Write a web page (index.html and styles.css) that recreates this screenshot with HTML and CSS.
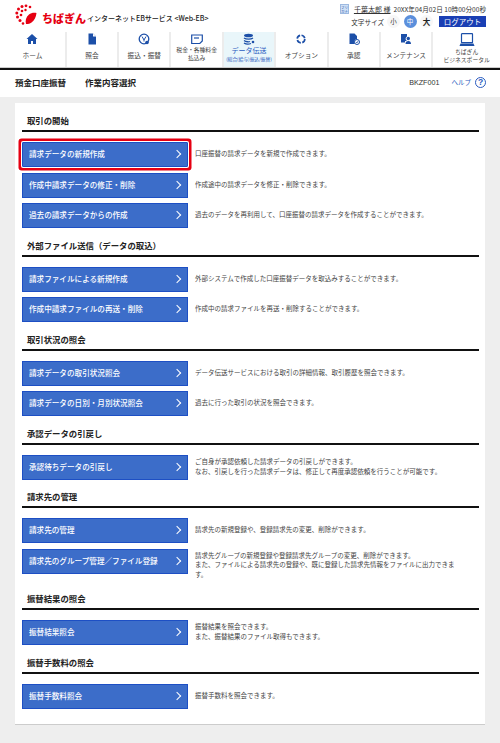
FILE: index.html
```html
<!DOCTYPE html>
<html>
<head>
    <title>作業内容選択</title>
    <link rel="stylesheet" href="styles.css">
</head>
<body>
    <header class="header">
        <div class="top">
            <div class="brand">
                <svg class="logo" viewBox="0 0 22 22" width="22" height="22">
                    <g fill="#e60012">
                        <path d="M11 20c-1-3 0-7 3-9.500 2-1.700 5-2.200 7.500-1.500-.5 4-2 7.500-5 9.500-1.700 1.100-3.600 1.600-5.500 1.500z"/>
                        <circle cx="7" cy="2.500" r="1.500"/>
                        <circle cx="11" cy="1.800" r="1.400"/>
                        <circle cx="15" cy="3" r="1.300"/>
                        <circle cx="3.500" cy="5" r="1.500"/>
                        <circle cx="1.800" cy="9" r="1.500"/>
                        <circle cx="2.500" cy="13" r="1.500"/>
                        <circle cx="5" cy="16.500" r="1.500"/>
                        <circle cx="8" cy="19.500" r="1.300"/>
                        <circle cx="7" cy="7" r="1.300"/>
                        <circle cx="10.500" cy="6" r="1.200"/>
                        <circle cx="6" cy="11" r="1.300"/>
                    </g>
                </svg>
                <span class="bank">ちばぎん</span>
                <span class="service">インターネットEBサービス &lt;Web-EB&gt;</span>
            </div>
            <div class="user">
                <div class="user-row">
                    <span class="kana">フリ<br>ガナ</span>
                    <a class="name">千葉太郎 様</a>
                    <span class="date">20XX年04月02日 10時00分00秒</span>
                </div>
                <div class="user-row size-row">
                    <span class="size-label">文字サイズ</span>
                    <span class="size">小</span>
                    <span class="size active">中</span>
                    <span class="size large">大</span>
                    <span class="logout">ログアウト</span>
                </div>
            </div>
        </div>
        <nav class="nav">
            <a class="nav-item first">
                <svg viewBox="0 0 12 12" width="12" height="12"><path d="M6 1 .5 6H2v5h3V8h2v3h3V6h1.500z" fill="#1c4fa8"/></svg>
                <span>ホーム</span>
            </a>
            <a class="nav-item">
                <svg viewBox="0 0 12 12" width="12" height="12"><path d="M2.500 .5h4.500l3 3v8h-7.500z" fill="#1c4fa8"/><path d="M7 .5v3h3" fill="#fff"/></svg>
                <span>照会</span>
            </a>
            <a class="nav-item">
                <svg viewBox="0 0 12 12" width="12" height="12"><circle cx="6" cy="6" r="4.800" fill="none" stroke="#1c4fa8" stroke-width="1.300"/><path d="M4 3.500 6 7l2-3.500M6 7v1.500" fill="none" stroke="#1c4fa8"/><circle cx="9" cy="9.500" r="1.800" fill="#1c4fa8"/></svg>
                <span>振込・振替</span>
            </a>
            <a class="nav-item small">
                <svg viewBox="0 0 12 12" width="12" height="12"><path d="M.7 2h10.600v6l-2.500 2.500H.7z" fill="none" stroke="#1c4fa8" stroke-width="1.200"/><path d="M3 5h5" stroke="#1c4fa8" stroke-width="1.200"/></svg>
                <span>税金・各種料金<br>払込み</span>
            </a>
            <a class="nav-item small current">
                <svg viewBox="0 0 12 12" width="12" height="12"><ellipse cx="5.500" cy="2.500" rx="4.500" ry="1.800" fill="#1c4fa8"/><path d="M1 5c2 1.500 7 1.500 9 0M1 7.500c2 1.500 5 1.500 6 1M1 10c2 1.300 5 1.300 7 .5" fill="none" stroke="#1c4fa8" stroke-width="1.300"/><circle cx="10" cy="9" r="1.300" fill="#1c4fa8"/></svg>
                <span class="current-label">データ伝送</span>
                <span class="current-sub">(総合(給与)振込/振替)</span>
            </a>
            <a class="nav-item">
                <svg viewBox="0 0 12 12" width="12" height="12"><circle cx="6" cy="6" r="3.800" fill="none" stroke="#1c4fa8" stroke-width="1.700" stroke-dasharray="4.500 1.500"/></svg>
                <span>オプション</span>
            </a>
            <a class="nav-item">
                <svg viewBox="0 0 12 12" width="12" height="12"><path d="M1.500 .5h5l2.500 2.500v3a3 3 0 0 0-2 5h-5.500z" fill="#1c4fa8"/><circle cx="9" cy="9" r="2.500" fill="none" stroke="#1c4fa8"/><path d="M8 9l1 1 1-2" fill="none" stroke="#1c4fa8" stroke-width=".7"/></svg>
                <span>承認</span>
            </a>
            <a class="nav-item">
                <svg viewBox="0 0 12 12" width="12" height="12"><path d="M1 1h6v2.500a2.500 2.500 0 0 0 0 4.500H5v1.500h-4z" fill="#1c4fa8"/><circle cx="8.300" cy="5.500" r="1.700" fill="#1c4fa8"/><path d="M5.500 11c0-2 1-3 2.800-3s2.700 1 2.700 3z" fill="#1c4fa8"/></svg>
                <span>メンテナンス</span>
            </a>
            <a class="nav-item last small">
                <svg viewBox="0 0 16 14" width="16" height="14"><rect x="2.500" y=".7" width="11" height="9" rx=".5" fill="none" stroke="#1c4fa8" stroke-width="1.200"/><path d="M1.500 10.500h13l1 2.500H.5z" fill="#1c4fa8"/></svg>
                <span>ちばぎん<br>ビジネスポータル</span>
            </a>
        </nav>
    </header>

    <div class="title-bar">
        <div class="titles">
            <span>預金口座振替</span>
            <span>作業内容選択</span>
        </div>
        <div class="help-box">
            <span class="screen-id">BKZF001</span>
            <a class="help">ヘルプ</a>
            <span class="help-mark">?</span>
        </div>
    </div>

    <main class="card">
        <section class="section">
            <h2>取引の開始</h2>
            <div class="row">
                <a class="btn focus"><span>請求データの新規作成</span></a>
                <p>口座振替の請求データを新規で作成できます。</p>
            </div>
            <div class="row">
                <a class="btn"><span>作成中請求データの修正・削除</span></a>
                <p>作成途中の請求データを修正・削除できます。</p>
            </div>
            <div class="row">
                <a class="btn"><span>過去の請求データからの作成</span></a>
                <p>過去のデータを再利用して、口座振替の請求データを作成することができます。</p>
            </div>
        </section>

        <section class="section">
            <h2>外部ファイル送信（データの取込）</h2>
            <div class="row">
                <a class="btn"><span>請求ファイルによる新規作成</span></a>
                <p>外部システムで作成した口座振替データを取込みすることができます。</p>
            </div>
            <div class="row">
                <a class="btn"><span>作成中請求ファイルの再送・削除</span></a>
                <p>作成中の請求ファイルを再送・削除することができます。</p>
            </div>
        </section>

        <section class="section">
            <h2>取引状況の照会</h2>
            <div class="row">
                <a class="btn"><span>請求データの取引状況照会</span></a>
                <p>データ伝送サービスにおける取引の詳細情報、取引履歴を照会できます。</p>
            </div>
            <div class="row">
                <a class="btn"><span>請求データの日別・月別状況照会</span></a>
                <p>過去に行った取引の状況を照会できます。</p>
            </div>
        </section>

        <section class="section">
            <h2>承認データの引戻し</h2>
            <div class="row">
                <a class="btn"><span>承認待ちデータの引戻し</span></a>
                <p>ご自身が承認依頼した請求データの引戻しができます。<br>なお、引戻しを行った請求データは、修正して再度承認依頼を行うことが可能です。</p>
            </div>
        </section>

        <section class="section">
            <h2>請求先の管理</h2>
            <div class="row">
                <a class="btn"><span>請求先の管理</span></a>
                <p>請求先の新規登録や、登録請求先の変更、削除ができます。</p>
            </div>
            <div class="row tall">
                <a class="btn"><span>請求先のグループ管理／ファイル登録</span></a>
                <p>請求先グループの新規登録や登録請求先グループの変更、削除ができます。<br>また、ファイルによる請求先の登録や、既に登録した請求先情報をファイルに出力できます。</p>
            </div>
        </section>

        <section class="section">
            <h2>振替結果の照会</h2>
            <div class="row">
                <a class="btn"><span>振替結果照会</span></a>
                <p>振替結果を照会できます。<br>また、振替結果のファイル取得もできます。</p>
            </div>
        </section>

        <section class="section">
            <h2>振替手数料の照会</h2>
            <div class="row">
                <a class="btn"><span>振替手数料照会</span></a>
                <p>振替手数料を照会できます。</p>
            </div>
        </section>
    </main>
</body>
</html>
```

FILE: styles.css
```css
* {
    box-sizing: border-box;
}
html, body {
    height: 743px;
    overflow: hidden;
}
body {
    margin: 0;
    background: #eeeeee;
    font-family: "Noto Sans CJK JP", "Noto Sans", sans-serif;
    color: #333;
}
.header {
    background: #fff;
    border-bottom: 2px solid #111;
    height: 70px;
}
.top {
    display: flex;
    justify-content: space-between;
    height: 32px;
}
.brand {
    display: flex;
    align-items: center;
    padding: 6px 0 2px 15px;
}
.logo {
    margin: 0 5px 6px 0;
}
.bank {
    color: #e60012;
    font-size: 11px;
    font-weight: 900;
    line-height: 14px;
}
.service {
    margin-left: 1px;
    font-size: 7px;
    font-weight: 500;
    color: #222;
    white-space: nowrap;
}
.user {
    padding: 3px 14px 0 0;
}
.user-row {
    display: flex;
    align-items: center;
    justify-content: flex-end;
    height: 11px;
    font-size: 6.600px;
    white-space: nowrap;
}
.kana {
    width: 9px;
    height: 10px;
    margin-right: 5px;
    padding-top: 1px;
    background: #cfe0f5;
    border: 1px solid #9db9e0;
    color: #2a5bb0;
    font-size: 3.500px;
    line-height: 4px;
    text-align: center;
}
.name {
    margin-right: 3px;
    font-size: 7px;
    text-decoration: underline;
}
.size-row {
    height: 13px;
    margin-top: 1px;
}
.size-label {
    margin-right: 3px;
    font-size: 6.600px;
}
.size {
    width: 13px;
    height: 13px;
    margin-right: 3.500px;
    border-radius: 50%;
    background: #f7f7f7;
    font-size: 6.500px;
    line-height: 13px;
    text-align: center;
}
.size.active {
    background: #5b8fdc;
    color: #fff;
}
.size.large {
    font-size: 7.500px;
    font-weight: 700;
    color: #222;
}
.logout {
    width: 47px;
    height: 11px;
    margin-left: 2.500px;
    background: #1a3fb4;
    color: #fff;
    font-size: 7.500px;
    line-height: 11px;
    text-align: center;
}
.nav {
    display: flex;
    height: 36px;
    border-bottom: 1px solid #ccc;
}
.nav-item {
    display: flex;
    flex-direction: column;
    align-items: center;
    width: 52.500px;
    padding-top: 1px;
    border-right: 2px solid #ececec;
    font-size: 6.700px;
    line-height: 8px;
    text-align: center;
    color: #444;
    white-space: nowrap;
}
.nav-item span {
    margin-top: 6px;
}
.nav-item.first {
    width: 67px;
}
.nav-item.last {
    width: 67px;
    border-right: none;
}
.nav-item.small {
    font-size: 5.800px;
    line-height: 8.500px;
}
.nav-item.small span {
    margin-top: .5px;
}
.nav-item.current {
    background: #e9f6fa;
    color: #2a5bc0;
}
.nav-item.current .current-label {
    margin-top: 1px;
    font-size: 7px;
}
.nav-item.current .current-sub {
    margin-top: 0;
    font-size: 4.700px;
}
.title-bar {
    display: flex;
    justify-content: space-between;
    align-items: center;
    height: 27px;
    padding: 0 14px 3px 15px;
    background: #fff;
}
.titles {
    display: flex;
    gap: 19px;
    font-size: 8.500px;
    font-weight: 700;
    color: #222;
}
.help-box {
    display: flex;
    align-items: center;
}
.screen-id {
    margin-right: 12px;
    font-family: "Liberation Sans", sans-serif;
    font-size: 7.200px;
}
.help {
    margin-right: 4px;
    color: #2a5bc0;
    font-size: 6.500px;
}
.help-mark {
    width: 11px;
    height: 11px;
    border: 1.200px solid #2a5bc0;
    border-radius: 50%;
    color: #2a5bc0;
    font-family: "Liberation Sans", sans-serif;
    font-size: 8.500px;
    font-weight: 700;
    line-height: 9px;
    text-align: center;
}
.card {
    width: 470px;
    height: 622px;
    margin: 6px 0 0 15px;
    padding: 12px 6px 0 7px;
    background: #fff;
    border-bottom: 1px solid #ccc;
}
.section {
    margin-bottom: 11.500px;
}
.section h2 {
    margin: 0 0 10px;
    padding: 0 0 5px 5px;
    border-bottom: 2px solid #111;
    font-size: 8.400px;
    font-weight: 700;
    line-height: 10px;
    color: #222;
}
.row {
    display: flex;
    align-items: flex-start;
    margin-bottom: 5.500px;
}
.row:last-child {
    margin-bottom: 0;
}
.row.tall {
    padding-bottom: 1px;
}
.btn {
    display: flex;
    flex: none;
    justify-content: space-between;
    align-items: center;
    width: 166px;
    height: 25px;
    padding: 0 7px 2px 6px;
    background: #3c6dc9;
    border: 1px solid #1d4fc4;
    color: #fff;
    font-size: 7.600px;
    font-weight: 500;
    white-space: nowrap;
}
.btn::after {
    content: "";
    width: 5px;
    height: 5px;
    margin-top: 1px;
    border-top: 1.500px solid #fff;
    border-right: 1.500px solid #fff;
    transform: rotate(45deg);
}
.btn.focus {
    border-radius: 1px;
    box-shadow: 0 0 0 1px #fff, 0 0 0 3.500px #e60012;
}
.row p {
    align-self: center;
    margin: 0;
    padding: 0 15px 1px 7px;
    font-size: 6.500px;
    line-height: 9.700px;
    color: #444;
}
.row.tall p {
    padding-top: 2px;
}
```
